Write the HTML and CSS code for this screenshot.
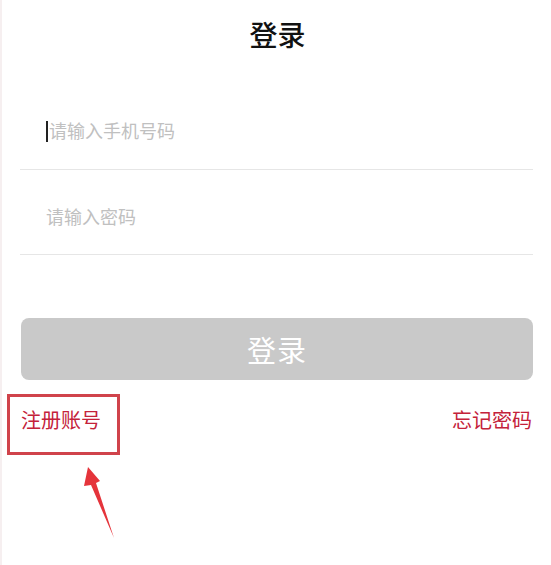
FILE: index.html
```html
<!DOCTYPE html>
<html lang="zh-CN">
<head>
<meta charset="utf-8">
<title>登录</title>
<link rel="stylesheet" href="styles.css">
</head>
<body>
<div class="page">
  <header class="title">登录</header>
  <div class="form">
    <div class="field"><span class="caret"></span><span class="placeholder">请输入手机号码</span></div>
    <div class="field"><span class="placeholder">请输入密码</span></div>
  </div>
  <div class="btn-wrap"><button class="login-btn" type="button">登录</button></div>
  <div class="links">
    <a class="link register">注册账号</a>
    <a class="link forgot">忘记密码</a>
    <span class="mark-box"></span>
  </div>
  <svg class="mark-arrow" width="40" height="80" viewBox="80 462 40 80" xmlns="http://www.w3.org/2000/svg">
    <polygon points="88,467 100,481 96,483 114,538 91,485 84,486" fill="#e5343b"/>
  </svg>
</div>
</body>
</html>
```

FILE: styles.css
```css
html, body {
  margin: 0;
  padding: 0;
  background: #ffffff;
}
body {
  font-family: "Noto Sans CJK SC", "Noto Sans", sans-serif;
}
.page {
  position: relative;
  width: 551px;
  height: 565px;
  box-sizing: border-box;
  border-left: 2px solid #f6eff0;
}
.title {
  height: 69px;
  line-height: 69px;
  text-align: center;
  font-size: 28px;
  font-weight: 500;
  color: #111111;
  padding-left: 2px;
}
.form {
  padding: 16px 18px 0 18px;
}
.field {
  height: 84px;
  box-sizing: content-box;
  border-bottom: 1px solid #e6e6e6;
  display: flex;
  align-items: center;
  padding-left: 26px;
}
.field .caret,
.field .placeholder {
  position: relative;
  top: 4px;
}
.caret {
  display: inline-block;
  width: 2px;
  height: 21px;
  background: #222222;
  margin-right: 1px;
}
.placeholder {
  font-size: 18px;
  line-height: 24px;
  color: #c0c0c0;
}
.field:first-child .placeholder {
  top: 3px;
}
.btn-wrap {
  padding: 63px 18px 0 19px;
}
.login-btn {
  display: block;
  width: 100%;
  height: 62px;
  border: none;
  border-radius: 8px;
  background: #c9c9c9;
  color: #ffffff;
  font-family: "Noto Sans CJK SC", "Noto Sans", sans-serif;
  font-size: 29px;
  letter-spacing: 1px;
  padding: 0;
}
.links {
  position: relative;
  display: flex;
  justify-content: space-between;
  padding: 27px 19px 0 19px;
}
.link {
  font-size: 20px;
  line-height: 26px;
  color: #c4223a;
}
.mark-box {
  position: absolute;
  left: 5px;
  top: 14px;
  width: 107px;
  height: 55px;
  border: 3px solid #d0434b;
}
.mark-arrow {
  position: absolute;
  left: 78px;
  top: 462px;
}
```
